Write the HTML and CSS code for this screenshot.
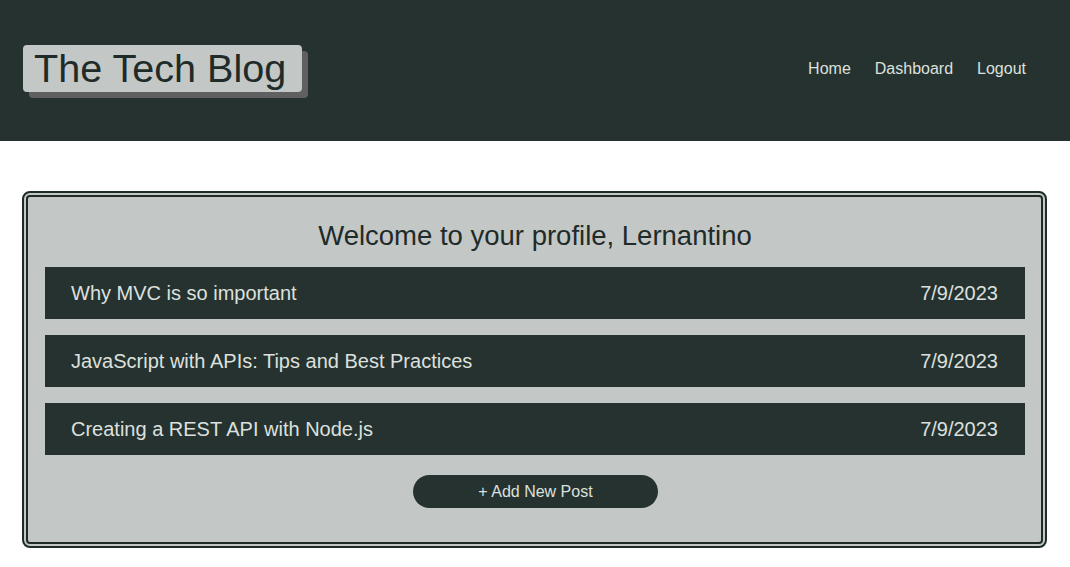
FILE: index.html
```html
<!DOCTYPE html>
<html lang="en">
<head>
<meta charset="utf-8">
<title>The Tech Blog</title>
<link rel="stylesheet" href="styles.css">
</head>
<body>
<header class="site-header">
  <h1 class="logo">The Tech Blog</h1>
  <nav class="nav">
    <a href="#">Home</a>
    <a href="#">Dashboard</a>
    <a href="#">Logout</a>
  </nav>
</header>
<main class="main">
  <section class="card">
    <h2 class="card-title">Welcome to your profile, Lernantino</h2>
    <ul class="posts">
      <li class="post"><span>Why MVC is so important</span><span>7/9/2023</span></li>
      <li class="post"><span>JavaScript with APIs: Tips and Best Practices</span><span>7/9/2023</span></li>
      <li class="post"><span>Creating a REST API with Node.js</span><span>7/9/2023</span></li>
    </ul>
    <div class="actions">
      <button class="add-btn">+ Add New Post</button>
    </div>
  </section>
</main>
</body>
</html>
```
FILE: styles.css
```css
* { box-sizing: border-box; }
body {
  margin: 0;
  font-family: "Liberation Sans", Arial, sans-serif;
  background: #ffffff;
  color: #253230;
}
.site-header {
  height: 141px;
  background: #253230;
  display: flex;
  align-items: center;
  justify-content: space-between;
  padding: 0 44px 0 23px;
}
.logo {
  margin: 0 0 4px 0;
  font-size: 39.6px;
  font-weight: normal;
  line-height: 47px;
  background: #c3c7c5;
  color: #1f2b29;
  padding: 0 16px 0 11px;
  border-radius: 4px;
  box-shadow: 6px 6px 0 #5f605f;
}
.nav {
  display: flex;
  gap: 24px;
  margin-bottom: 3px;
}
.nav a {
  color: #dde0de;
  text-decoration: none;
  font-size: 16px;
}
.main {
  padding: 50px 23px 20px 22px;
}
.card {
  background: #c3c7c5;
  border: 6px double #1f2b29;
  border-radius: 8px;
  padding: 24px 16px 34px 17px;
}
.card-title {
  margin: 0 0 16px;
  text-align: center;
  font-weight: normal;
  font-size: 27.5px;
  line-height: 30px;
  color: #1f2b29;
}
.posts {
  list-style: none;
  margin: 0;
  padding: 0;
  display: flex;
  flex-direction: column;
  gap: 16px;
}
.post {
  height: 52px;
  background: #253230;
  color: #dde0de;
  display: flex;
  align-items: center;
  justify-content: space-between;
  padding: 0 27px 0 26px;
  font-size: 20px;
}
.actions {
  display: flex;
  justify-content: center;
  margin-top: 20px;
}
.add-btn {
  width: 245px;
  height: 33px;
  border: none;
  border-radius: 17px;
  background: #253230;
  color: #dde0de;
  font-family: "Liberation Sans", Arial, sans-serif;
  font-size: 16px;
  padding: 0;
  margin-left: 1px;
}
```
